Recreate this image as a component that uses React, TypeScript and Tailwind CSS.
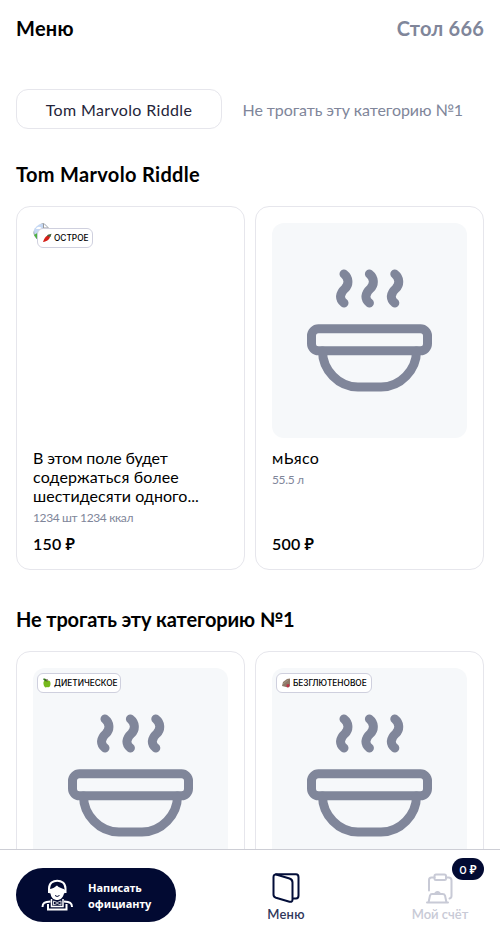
import React from "react";

function Bowl() {
  return (
    <svg className="-ml-px" width="126" height="124" viewBox="0 0 126 124" fill="none" stroke="#80869a" strokeWidth="9" strokeLinecap="round" strokeLinejoin="round">
      {[0, 25.4, 50.8].map((x) => (
        <path key={x} transform={`translate(${x} 0)`} d="M38 6C42.500 9.500 43.500 16 39 20.500C33.500 25.500 33 31 38 35" />
      ))}
      <rect x="5.500" y="60.800" width="116" height="22" rx="7" />
      <path d="M16.500 83C16.500 102 32.500 119 52 119H75C94.500 119 110.500 102 110.500 83" />
    </svg>
  );
}

function Pepper() {
  return (
    <svg width="10" height="10" viewBox="0 0 10 10">
      <path d="M1 9C2 6 3.500 3 6 2.500L8 3.500C8 6 5 8.500 1 9Z" fill="#d52018" />
      <path d="M5 3C5.500 1.500 7 1.500 9.500 .8L8.500 4Z" fill="#47613b" />
    </svg>
  );
}

function Apple() {
  return (
    <svg width="10" height="10" viewBox="0 0 10 10">
      <path d="M5 3C2.500 1.500 1 3.500 1.500 6C2 9 3.500 10 5 9C7.500 10 8.500 8 8.500 5.500C8.500 3 7 2 5 3Z" fill="#76b91d" />
      <path d="M1 1C3 0 4.500 1 4.800 3C3 3.500 1.800 2.500 1 1Z" fill="#34751c" />
      <path d="M5 3.500V1" stroke="#513d21" />
    </svg>
  );
}

function Grain() {
  return (
    <svg width="10" height="10" viewBox="0 0 10 10">
      <path d="M1 8L2 4L6 1L9 .5V8L7 9.500Z" fill="#8d7968" />
      <path d="M2 6L7 2" stroke="#a39483" />
      <path d="M5.500 6.500L8 6L8.500 8.500L7 9.500L5.500 8.500Z" fill="#bd3347" />
    </svg>
  );
}

function BrokenImage() {
  return (
    <svg className="block" width="16" height="16" viewBox="0 0 16 16">
      <path d="M.5 7C1 3 4 .5 8 .5H11L15.500 5V16H4C2 14 .5 11 .5 7Z" fill="#c5d8f4" stroke="#a0a5ab" />
      <path d="M10.500 1V5H15" fill="#fff" stroke="#999" />
      <path d="M3 6C4 3 8 3 9 6Z" fill="#fff" />
      <path d="M1 12L6 9V16H4Z" fill="#4bb33d" />
    </svg>
  );
}

function Tag({ icon, children, className }: { icon: React.ReactNode; children: string; className: string }) {
  return (
    <div className={`absolute left-1 top-[5px] flex h-5 items-center gap-[2px] rounded-[6px] border border-[#cfd0de] bg-white pl-1 font-[Inter,sans-serif] font-medium whitespace-nowrap text-black ${className}`}>
      {icon}
      <span>{children}</span>
    </div>
  );
}

type CardProps = { title?: React.ReactNode; meta?: string; price?: string; tag?: React.ReactNode; broken?: boolean };

function Card({ title, meta, price, tag, broken }: CardProps) {
  return (
    <article className="flex h-[364px] flex-col rounded-[14px] border border-[#e6e6ec] p-4">
      <div className={broken ? "relative h-[215px] shrink-0 overflow-hidden rounded-xl" : "relative flex h-[215px] shrink-0 justify-center rounded-xl bg-[#f6f8fa] pt-[45px]"}>
        {broken ? <BrokenImage /> : <Bowl />}
        {tag}
      </div>
      <div className="mt-[10px] text-[16px] leading-[19px]">{title}</div>
      <div className="mt-[5px] text-[12px] leading-[16px] tracking-[-0.36px] text-[#80869a]">{meta}</div>
      <div className="mt-auto text-[16px] leading-[19px] font-semibold tracking-[0.2px]">{price}</div>
    </article>
  );
}

function Waiter() {
  return (
    <svg width="32" height="32" viewBox="0 0 32 32" fill="none">
      <path d="M8 14V9.500C8-1 24.500-1 24.500 9.500V14" stroke="#fff" strokeWidth="2" />
      <path d="M8 14C7.500 10 9 10 11 9.500C14 8.500 15 7 16 6.500C18 9 21 9 22.500 10C24.500 10 25 14 23 14.500C22 19 19 21 16.200 21C13 21 10 19 9.500 14.500Z" fill="#fff" />
      <path d="M1.500 28C1.500 24 3.500 23 9.500 22.500M31 28C31 24 29 23 23 22.500" stroke="#fff" strokeWidth="2" />
      <path d="M7 25V30.500H25.500V25" stroke="#fff" strokeWidth="2" />
      <path d="M10.500 20V27.500H22V20" stroke="#fff" strokeWidth="1.500" />
      <path d="M12.500 22L16.200 23.500L20 22V26L16.200 24.500L12.500 26Z" stroke="#fff" strokeWidth=".8" />
      <path d="M14 16.500Q16 18.500 18.500 16.500" stroke="#020a32" />
    </svg>
  );
}

function MenuIcon() {
  return (
    <svg width="28" height="32" viewBox="-.5 0 28 32" fill="none" stroke="#020d38" strokeWidth="2" strokeLinecap="round" strokeLinejoin="round">
      <path d="M3.500 1.200H23.500Q26 1.200 26 4.200V22.500Q26 25.500 23.500 25.500H21" />
      <path d="M4.500 1.700L17 5.500Q20 6.500 20 9.500V26.500Q20 29.500 17 28.700L3.500 24.800Q1 24 1 21.500V4Q1 .8 4.500 1.700Z" />
    </svg>
  );
}

function BillIcon() {
  return (
    <svg width="28" height="32" viewBox="0 0 28 32" fill="none" stroke="#c8cad6" strokeWidth="2" strokeLinecap="round" strokeLinejoin="round">
      <path d="M3 17.500V7Q3 4.500 5.500 4.500H8.500M20 4.500H22.500Q25.500 4.500 25.500 7.500V23Q25.500 25 23.500 25.500" />
      <rect x="8.500" y="1.500" width="11.500" height="5.500" rx="1.500" />
      <path d="M1 29.500H22M2.500 29.500L4 22.500Q4.500 21 6 21H16.500Q18.500 21 19 22.500L20.500 29.500" />
      <path d="M9.500 20Q11.500 18 13.500 20" />
    </svg>
  );
}

export default function App() {
  return (
    <div className="h-[939px] overflow-hidden bg-white font-[Lato,'Noto_Sans',sans-serif] text-black">
      <div className="flex h-[849px] flex-col overflow-hidden px-4">
        <header className="flex h-[56px] shrink-0 items-center justify-between text-[20px] font-bold">
          <h1 className="tracking-[0.3px]">Меню</h1>
          <span className="tracking-[0.2px] text-[#80869a]">Стол 666</span>
        </header>
        <nav className="mt-[33px] flex h-10 shrink-0 text-[16px]">
          <button className="w-[206px] rounded-xl border border-[#e6e6ec] pt-[2px] tracking-[0.35px] text-[#25253a]"><span>Tom Marvolo Riddle</span></button>
          <button className="ml-[20.500px] pt-[2px] tracking-[-0.08px] whitespace-nowrap text-[#80869a]"><span>Не трогать эту категорию №1</span></button>
        </nav>
        <h2 className="mt-[30px] h-[30px] shrink-0 text-[20px] leading-[30px] font-bold tracking-[0.33px]"><span>Tom Marvolo Riddle</span></h2>
        <section className="mt-[17px] grid shrink-0 grid-cols-2 gap-[10px]">
          <Card broken tag={<Tag className="w-14 text-[8.3px]" icon={<Pepper />}>ОСТРОЕ</Tag>} title={<><span className="tracking-[-0.1px]">В этом поле будет</span><br /><span className="tracking-[0.15px]">содержаться более</span><br /><span className="tracking-[0.04px]">шестидесяти одного...</span></>} meta="1234 шт 1234 ккал" price="150 ₽" />
          <Card title={<span className="tracking-[0.4px]">мЬясо</span>} meta="55.5 л" price="500 ₽" />
        </section>
        <h2 className="mt-[34px] h-[30px] shrink-0 text-[20px] leading-[30px] font-bold tracking-[-0.13px]"><span>Не трогать эту категорию №1</span></h2>
        <section className="mt-[17px] grid shrink-0 grid-cols-2 gap-[10px]">
          <Card tag={<Tag className="w-[84px] text-[8.3px]" icon={<Apple />}>ДИЕТИЧЕСКОЕ</Tag>} />
          <Card tag={<Tag className="w-24 text-[8.3px]" icon={<Grain />}>БЕЗГЛЮТЕНОВОЕ</Tag>} />
        </section>
      </div>
      <footer className="flex h-[90px] border-t border-[#cdced5] bg-white px-4 pt-[18px]">
        <button className="flex h-[54px] w-40 items-center rounded-full bg-[#020a32] pl-[25px] text-white">
          <Waiter />
          <span className="mt-px ml-[15px] text-left font-['Noto_Sans',sans-serif] text-[11px] leading-4 font-bold">Написать<br />официанту</span>
        </button>
        <div className="ml-[75px] flex w-[70px] flex-col items-center pt-[5px] text-[13px] leading-4 font-semibold tracking-[0.2px] text-[#30385b]">
          <MenuIcon />
          <span className="mt-px">Меню</span>
        </div>
        <div className="relative ml-auto flex w-[88px] flex-col items-center pt-[5px] text-[13px] leading-4 font-semibold text-[#c8cad6]">
          <BillIcon />
          <span className="mt-px">Мой счёт</span>
          <span className="absolute -top-[10px] right-0 flex h-[22px] w-8 items-center justify-center rounded-full bg-[#020a32] pt-px text-[12px] text-white">0 ₽</span>
        </div>
      </footer>
    </div>
  );
}
